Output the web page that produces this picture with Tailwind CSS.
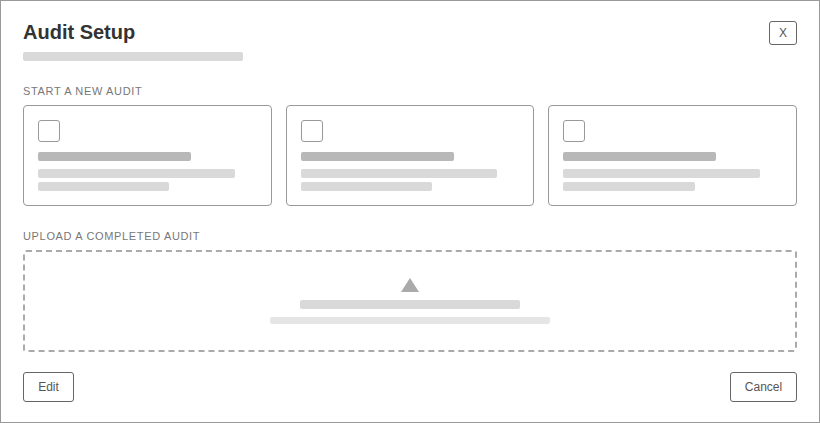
<!doctype html>
<html><head><meta charset="utf-8"><script src="https://cdn.jsdelivr.net/npm/@tailwindcss/browser@4"></script></head>
<body class="bg-white font-['Liberation_Sans',sans-serif]">
<div class="w-[820px] h-[423px] border border-[#999] bg-white px-[22px] pt-[20px] overflow-hidden flex flex-col">
  <div class="flex justify-between items-start">
    <div>
      <h1 class="text-[20px] leading-[23px] font-bold text-[#333]">Audit Setup</h1>
      <div class="mt-[8px] w-[220px] h-[9px] rounded-[2px] bg-[#d9d9d9]"></div>
    </div>
    <button class="w-[28px] h-[24px] border border-[#666] rounded-[3px] text-[12px] text-[#555] flex items-center justify-center">X</button>
  </div>
  <div class="mt-[24px] text-[11px] leading-[13px] tracking-[0.66px] text-[#777]">START A NEW AUDIT</div>
  <div class="mt-[7px] grid grid-cols-3 gap-[14px]">
    <div class="h-[101px] border border-[#999] rounded-[4px] p-[14px]">
      <div class="w-[22px] h-[22px] border border-[#999] rounded-[3px]"></div>
      <div class="mt-[10px] w-[70%] h-[9px] rounded-[2px] bg-[#b8b8b8]"></div>
      <div class="mt-[8px] w-[90%] h-[9px] rounded-[2px] bg-[#d9d9d9]"></div>
      <div class="mt-[4px] w-[60%] h-[9px] rounded-[2px] bg-[#d9d9d9]"></div>
    </div>
    <div class="h-[101px] border border-[#999] rounded-[4px] p-[14px]">
      <div class="w-[22px] h-[22px] border border-[#999] rounded-[3px]"></div>
      <div class="mt-[10px] w-[70%] h-[9px] rounded-[2px] bg-[#b8b8b8]"></div>
      <div class="mt-[8px] w-[90%] h-[9px] rounded-[2px] bg-[#d9d9d9]"></div>
      <div class="mt-[4px] w-[60%] h-[9px] rounded-[2px] bg-[#d9d9d9]"></div>
    </div>
    <div class="h-[101px] border border-[#999] rounded-[4px] p-[14px]">
      <div class="w-[22px] h-[22px] border border-[#999] rounded-[3px]"></div>
      <div class="mt-[10px] w-[70%] h-[9px] rounded-[2px] bg-[#b8b8b8]"></div>
      <div class="mt-[8px] w-[90%] h-[9px] rounded-[2px] bg-[#d9d9d9]"></div>
      <div class="mt-[4px] w-[60%] h-[9px] rounded-[2px] bg-[#d9d9d9]"></div>
    </div>
  </div>
  <div class="mt-[24px] text-[11px] leading-[13px] tracking-[0.66px] text-[#777]">UPLOAD A COMPLETED AUDIT</div>
  <div class="mt-[7px] h-[102px] border-2 border-dashed border-[#aaa] rounded-[3px] flex flex-col items-center pt-[26px]">
    <svg class="block" width="18" height="14" viewBox="0 0 18 14"><polygon points="9,0 18,14 0,14" fill="#aaa"/></svg>
    <div class="mt-[8px] w-[220px] h-[9px] rounded-[2px] bg-[#d9d9d9]"></div>
    <div class="mt-[8px] w-[280px] h-[7px] rounded-[2px] bg-[#e5e5e5]"></div>
  </div>
  <div class="mt-[20px] flex justify-between">
    <button class="w-[51px] h-[30px] border border-[#666] rounded-[3px] text-[12px] text-[#555] flex items-center justify-center">Edit</button>
    <button class="w-[67px] h-[30px] border border-[#666] rounded-[3px] text-[12px] text-[#555] flex items-center justify-center">Cancel</button>
  </div>
</div>
</body></html>
